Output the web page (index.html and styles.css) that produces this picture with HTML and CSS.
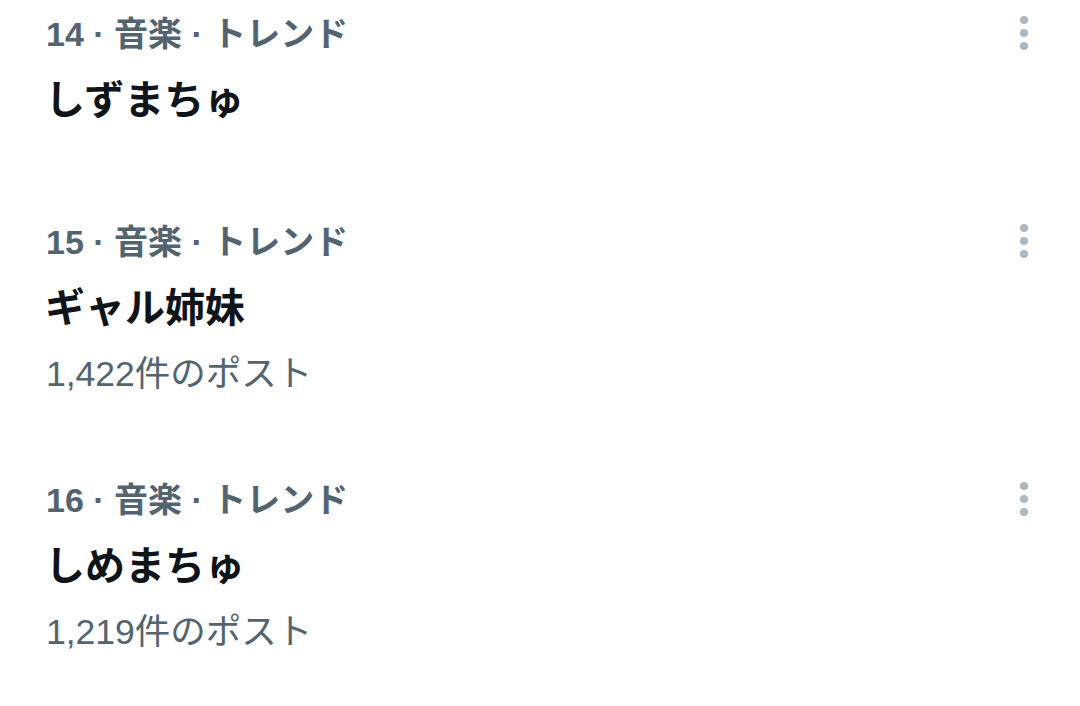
FILE: index.html
```html
<!DOCTYPE html>
<html lang="ja">
<head>
    <meta charset="UTF-8">
    <meta name="viewport" content="width=device-width, initial-scale=1.0">
    <title>トレンド</title>
    <link rel="stylesheet" href="styles.css">
</head>
<body>
    <div class="trends">
        <div class="trend trend-first">
            <div class="trend-body">
                <div class="trend-meta">14 · 音楽 · トレンド</div>
                <div class="trend-name">しずまちゅ</div>
            </div>
            <svg class="trend-more" width="10" height="36" viewBox="0 0 10 36"><circle cx="5" cy="5" r="4"/><circle cx="5" cy="18" r="4"/><circle cx="5" cy="31" r="4"/></svg>
        </div>
        <div class="trend">
            <div class="trend-body">
                <div class="trend-meta">15 · 音楽 · トレンド</div>
                <div class="trend-name">ギャル姉妹</div>
                <div class="trend-count">1,422件のポスト</div>
            </div>
            <svg class="trend-more" width="10" height="36" viewBox="0 0 10 36"><circle cx="5" cy="5" r="4"/><circle cx="5" cy="18" r="4"/><circle cx="5" cy="31" r="4"/></svg>
        </div>
        <div class="trend">
            <div class="trend-body">
                <div class="trend-meta">16 · 音楽 · トレンド</div>
                <div class="trend-name">しめまちゅ</div>
                <div class="trend-count">1,219件のポスト</div>
            </div>
            <svg class="trend-more" width="10" height="36" viewBox="0 0 10 36"><circle cx="5" cy="5" r="4"/><circle cx="5" cy="18" r="4"/><circle cx="5" cy="31" r="4"/></svg>
        </div>
    </div>
</body>
</html>
```

FILE: styles.css
```css
* {
    margin: 0;
    padding: 0;
    box-sizing: border-box;
}
body {
    font-family: "Liberation Sans", "Noto Sans CJK JP", sans-serif;
    background-color: #fff;
    color: #0f1419;
}
.trends {
    padding-top: 2px;
}
.trend {
    display: flex;
    justify-content: space-between;
    align-items: flex-start;
    padding: 0 51px 0 46px;
    margin-bottom: 62px;
}
.trend-first {
    padding-bottom: 14px;
}
.trend-meta {
    font-size: 34px;
    font-weight: bold;
    line-height: 64px;
    color: #536471;
}
.trend-name {
    font-size: 40px;
    font-weight: bold;
    line-height: 68px;
    margin-left: -1px;
}
.trend-count {
    font-size: 35.5px;
    line-height: 64px;
    color: #536471;
}
.trend-more {
    fill: #aab8c2;
    margin-top: 13px;
}
```
